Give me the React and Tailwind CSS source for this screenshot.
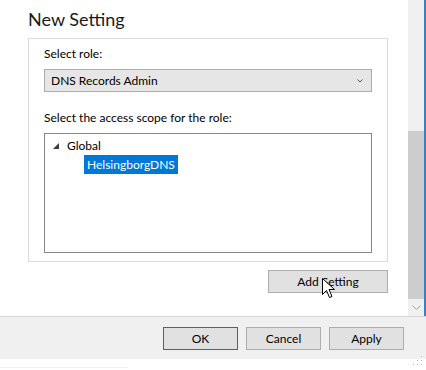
import React from "react";

const font = { fontFamily: 'Lato, "Noto Sans", sans-serif' };

function Button({ children, primary, className = "" }) {
  return (
    <div
      className={`flex h-[23px] items-center justify-center border bg-[#e1e1e1] text-[12px] text-black ${
        primary ? "border-[#0078d7]" : "border-[#adadad]"
      } ${className}`}
    >
      {children}
    </div>
  );
}

function Cursor() {
  return (
    <svg
      className="absolute left-[322px] top-[278px]"
      width="14"
      height="22"
      viewBox="0 0 14 22"
    >
      <path
        d="M0.5 0.5 L0.5 16.5 L4.5 12.5 L7.5 19.5 L10 18.5 L7 11.5 L12.5 11.5 Z"
        fill="#fff"
        stroke="#000"
        strokeWidth="1"
        strokeLinejoin="miter"
      />
    </svg>
  );
}

export default function App() {
  return (
    <div
      className="relative flex h-[370px] w-[426px] flex-col overflow-hidden bg-white"
      style={font}
    >
      <div className="flex h-[316px]">
        <div className="flex flex-1 flex-col pl-[28px]">
          <div className="mt-[6px] h-[28px] text-[18px] leading-[26px] text-[#1a1a1a]">
            New Setting
          </div>
          <div className="mt-[4px] flex h-[224px] w-[360px] flex-col border border-[#dcdcdc] px-[15px]">
            <div className="mt-[7px] text-[12px] leading-[16px]">Select role:</div>
            <div className="mt-[7px] flex h-[23px] items-center justify-between border border-[#acacac] bg-[#e6e6e6] pl-[6px] pr-[8px] text-[12px]">
              <span>DNS Records Admin</span>
              <svg width="6" height="4" viewBox="0 0 6 4">
                <path d="M0.5 0.5 L3 3 L5.5 0.5" fill="none" stroke="#555" strokeWidth="1" />
              </svg>
            </div>
            <div className="mt-[18px] text-[12px] leading-[16px]">
              Select the access scope for the role:
            </div>
            <div className="mt-[7px] flex h-[120px] flex-col border border-[#828790] bg-white pt-[4px] text-[12px]">
              <div className="flex h-[16px] items-center">
                <svg className="ml-[8px]" width="6" height="6" viewBox="0 0 6 6">
                  <polygon points="6,0 6,6 0,6" fill="#3c3c3c" />
                </svg>
                <span className="ml-[8px] leading-[16px]">Global</span>
              </div>
              <div className="ml-[39px] mt-[1px] flex h-[19px] w-fit items-center bg-[#0078d7] px-[3px] text-white">
                HelsingborgDNS
              </div>
            </div>
          </div>
          <div className="mt-[8px] flex w-[360px] justify-end">
            <Button className="w-[120px]">Add Setting</Button>
          </div>
        </div>
        <div className="flex w-[16px] flex-col bg-[#f0f0f0]">
          <div className="h-[131px]" />
          <div className="h-[168px] bg-[#cdcdcd]" />
          <div className="flex flex-1 items-center justify-center">
            <svg width="9" height="5" viewBox="0 0 9 5">
              <path d="M0.5 0.5 L4.5 4.5 L8.5 0.5" fill="none" stroke="#a6a6a6" strokeWidth="1" />
            </svg>
          </div>
        </div>
        <div className="w-[2px] bg-[#3a80c4]" />
      </div>
      <div className="flex h-[43px] justify-end gap-[8px] border-t border-[#d5d5d5] bg-[#f0f0f0] pr-[22px] pt-[10px]">
        <Button primary className="w-[75px]">OK</Button>
        <Button className="w-[75px]">Cancel</Button>
        <Button className="w-[75px]">Apply</Button>
      </div>
      <div className="relative flex-1 bg-white">
        <div className="mt-[8px] h-[1px] w-[128px] bg-[#f0f0f0]" />
        <svg className="absolute right-[3px] top-[-4px]" width="11" height="11" viewBox="0 0 11 11">
          {[
            [9, 1],
            [9, 5],
            [5, 5],
            [9, 9],
            [5, 9],
            [1, 9],
          ].map(([x, y], i) => (
            <rect key={i} x={x} y={y} width="1" height="1" fill="#b0b0b0" />
          ))}
        </svg>
      </div>
      <Cursor />
    </div>
  );
}
